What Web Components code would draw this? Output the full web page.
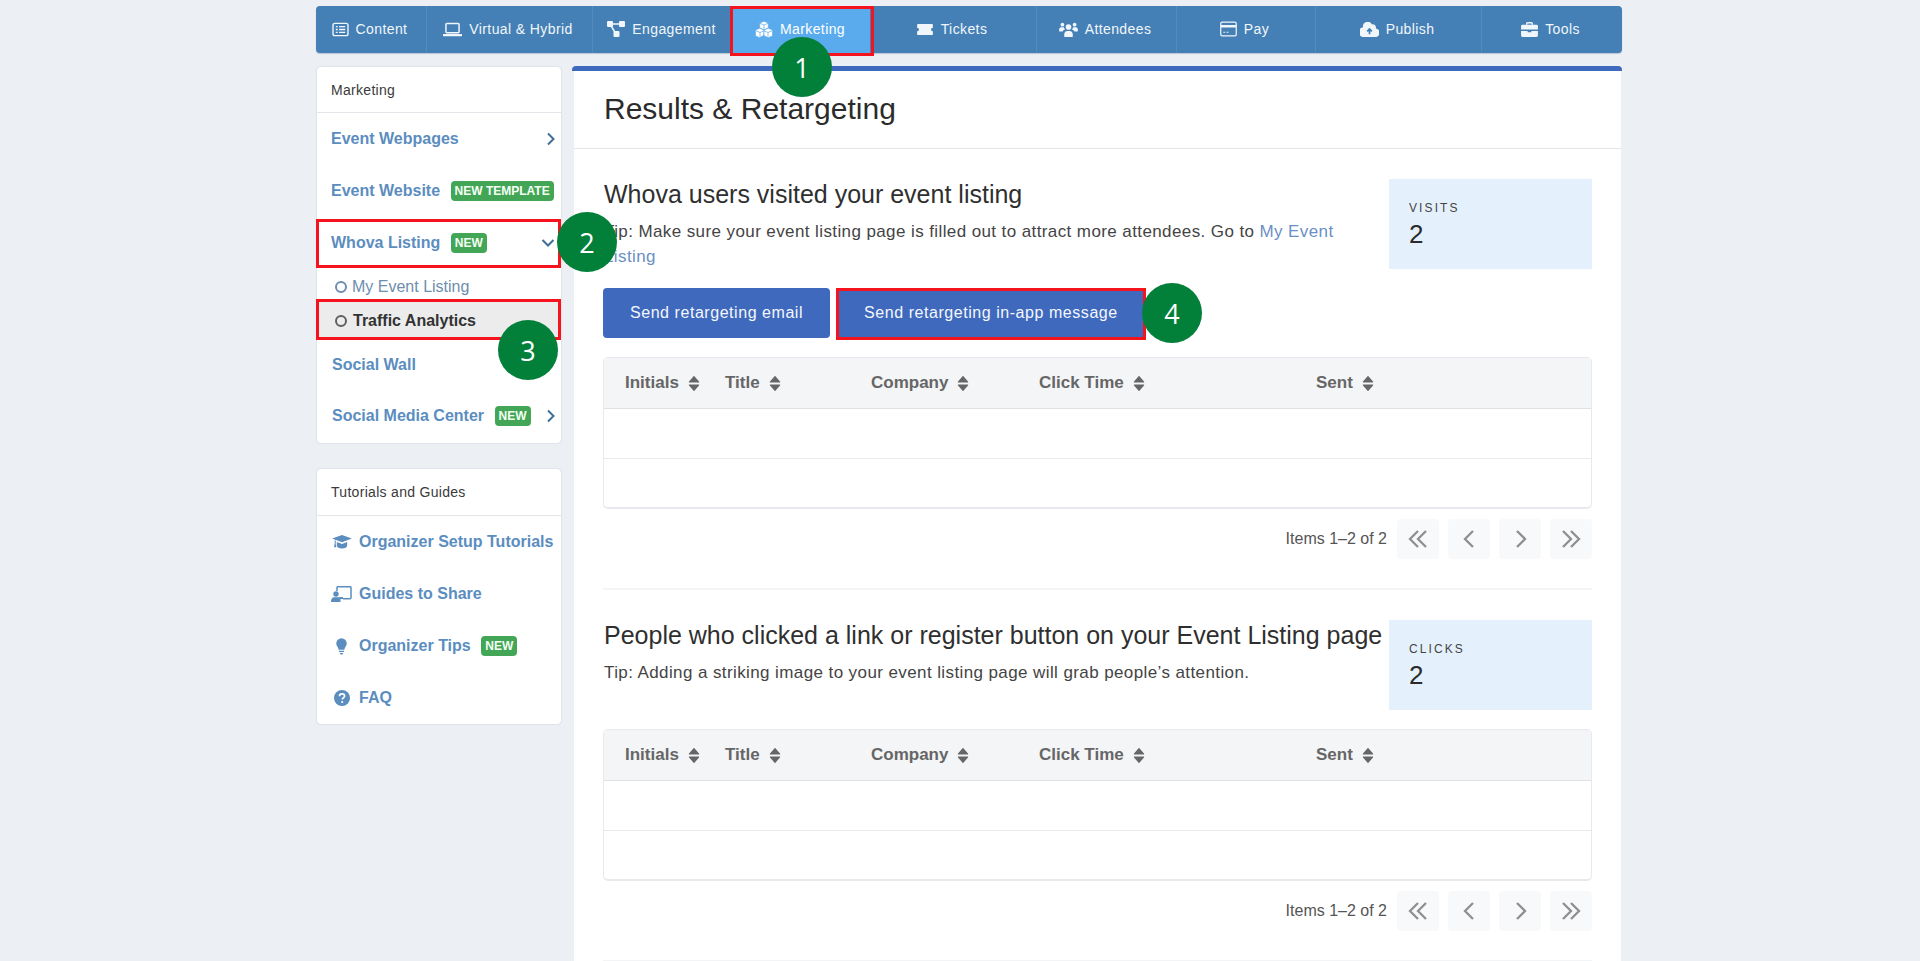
<!DOCTYPE html>
<html lang="en"><head><meta charset="utf-8"><title>Results &amp; Retargeting</title>
<style>
html,body{margin:0;height:961px;overflow:hidden;background:#ecf0f5;font-family:"Liberation Sans",Arial,sans-serif;color:#333}
</style></head><body>
<app-shell>
  <top-nav slot="nav">
    <nav-item w="111" icon="content">Content</nav-item>
    <nav-item w="166" icon="laptop">Virtual &amp; Hybrid</nav-item>
    <nav-item w="140" icon="diagram" plain>Engagement</nav-item>
    <nav-item w="137" icon="cubes" active>Marketing</nav-item>
    <nav-item w="167" icon="ticket">Tickets</nav-item>
    <nav-item w="140" icon="users">Attendees</nav-item>
    <nav-item w="139" icon="pay">Pay</nav-item>
    <nav-item w="166" icon="cloud">Publish</nav-item>
    <nav-item w="140" icon="tools" plain>Tools</nav-item>
  </top-nav>
  <side-card slot="side" heading="Marketing" h="376" hh="46">
    <side-item chev="right">Event Webpages</side-item>
    <side-item>Event Website<new-badge>NEW TEMPLATE</new-badge></side-item>
    <side-item chev="down">Whova Listing<new-badge>NEW</new-badge></side-item>
    <sub-item>My Event Listing</sub-item>
    <sub-item current>Traffic Analytics</sub-item>
    <side-item nudge>Social Wall</side-item>
    <side-item nudge chev="right">Social Media Center<new-badge>NEW</new-badge></side-item>
  </side-card>
  <side-card slot="side" heading="Tutorials and Guides" h="255" hh="47">
    <side-item icon="grad">Organizer Setup Tutorials</side-item>
    <side-item icon="teach">Guides to Share</side-item>
    <side-item icon="bulb">Organizer Tips<new-badge>NEW</new-badge></side-item>
    <side-item icon="help">FAQ</side-item>
  </side-card>
  <main-panel slot="main" heading="Results &amp; Retargeting">
    <result-section heading="Whova users visited your event listing" stat="VISITS" value="2">
      <span slot="tip">Tip: Make sure your event listing page is filled out to attract more attendees. Go to <text-link>My Event Listing</text-link></span>
      <action-button slot="actions">Send retargeting email</action-button>
      <action-button slot="actions">Send retargeting in-app message</action-button>
    </result-section>
    <result-section heading="People who clicked a link or register button on your Event Listing page" stat="CLICKS" value="2">
      <span slot="tip">Tip: Adding a striking image to your event listing page will grab people’s attention.</span>
    </result-section>
  </main-panel>
  <mark-box slot="marks" style="left:730px;top:6px;width:144px;height:50px"></mark-box>
  <mark-box slot="marks" style="left:316px;top:219px;width:245px;height:49px"></mark-box>
  <mark-box slot="marks" style="left:316px;top:299px;width:245px;height:41px"></mark-box>
  <mark-box slot="marks" style="left:836px;top:288px;width:310px;height:52px"></mark-box>
  <step-dot slot="marks" style="left:772px;top:37px">1</step-dot>
  <step-dot slot="marks" style="left:557px;top:212px">2</step-dot>
  <step-dot slot="marks" style="left:498px;top:320px">3</step-dot>
  <step-dot slot="marks" style="left:1142px;top:283px">4</step-dot>
</app-shell>
<script>
const ICONS={
content:'<svg viewBox="0 0 18 16" width="17" height="15"><rect x="1" y="1.5" width="16" height="13" rx="2" fill="none" stroke="currentColor" stroke-width="1.5"/><path d="M4 5h2M4 8h2M4 11h2M7.5 5H14M7.5 8H14M7.5 11H14" stroke="currentColor" stroke-width="1.4"/></svg>',
laptop:'<svg viewBox="0 0 20 16" width="19" height="15"><rect x="3" y="1.5" width="14" height="10" rx="1" fill="none" stroke="currentColor" stroke-width="1.6"/><path d="M.5 14h19" stroke="currentColor" stroke-width="2.2" stroke-linecap="round"/></svg>',
diagram:'<svg viewBox="0 0 18 16" width="18" height="16"><path d="M3 3h12M3 3l6 10" stroke="currentColor" stroke-width="1.5" fill="none"/><rect x="0" y="0" width="6" height="6" rx="1" fill="currentColor"/><rect x="12" y="0" width="6" height="6" rx="1" fill="currentColor"/><rect x="6.5" y="10" width="6" height="6" rx="1" fill="currentColor"/></svg>',
cubes:'<svg viewBox="0 0 18 17" width="18" height="17" fill="#fff" stroke="#5aabee" stroke-width=".7"><path d="M9 .2l4.300 1.800v5l-4.300 2-4.300-2V2z"/><path d="M4.700 7.200L9 9v5l-4.300 2.800L.4 14.800V9z"/><path d="M13.300 7.200L17.600 9v5.800l-4.300 2-4.300-2V9z"/><path d="M5 2.300l4 1.700 4-1.700M1 9.800l4 1.700 4-1.700 4 1.700 4-1.700M9 4v4.500M5 11.500v5M13 11.500v5" fill="none"/></svg>',
ticket:'<svg viewBox="0 0 18 14" width="18" height="13"><path d="M1.500 1h15a1 1 0 0 1 1 1v3a2 2 0 0 0 0 4v3a1 1 0 0 1-1 1h-15a1 1 0 0 1-1-1V9a2 2 0 0 0 0-4V2a1 1 0 0 1 1-1z" fill="currentColor"/></svg>',
users:'<svg viewBox="0 0 20 16" width="19" height="15" fill="currentColor"><circle cx="10" cy="5.300" r="3"/><path d="M5.500 16v-3c0-2 1.500-3.500 3-3.500h3c1.500 0 3 1.500 3 3.500v3z"/><circle cx="3.500" cy="2.800" r="2"/><circle cx="16.500" cy="2.800" r="2"/><path d="M0 9.500V8c0-1.500 1-2.500 2-2.500h3c.3 1 .8 1.800 1.500 2.400C5 8.300 4 9 3.700 10H.5a.5.5 0 0 1-.5-.5zM20 9.500V8c0-1.500-1-2.500-2-2.500h-3c-.3 1-.8 1.800-1.500 2.400 1.500.4 2.500 1.100 2.800 2.100h3.200a.5.5 0 0 0 .5-.5z"/></svg>',
pay:'<svg viewBox="0 0 18 16" width="17" height="16"><rect x=".8" y=".8" width="16.400" height="14.400" rx="1.500" fill="none" stroke="currentColor" stroke-width="1.300"/><path d="M1 5h16" stroke="currentColor" stroke-width="2.600"/><path d="M3.500 11.500h2M7 11.500h2" stroke="currentColor" stroke-width="1.200"/></svg>',
cloud:'<svg viewBox="0 0 20 16" width="19" height="15"><path d="M16.700 7A3.500 3.500 0 0 0 12.500 2.500 5 5 0 0 0 3.100 5.500 4.600 4.600 0 0 0 4.500 16h11.500a4.500 4.500 0 0 0 .7-9z" fill="currentColor"/><path d="M10 13V7.500M7.500 10L10 7.500l2.500 2.500" fill="none" stroke="#4480b5" stroke-width="1.800"/></svg>',
tools:'<svg viewBox="0 0 18 16" width="17" height="15"><path d="M6 3V1.800A1 1 0 0 1 7 .8h4a1 1 0 0 1 1 1V3" fill="none" stroke="currentColor" stroke-width="1.500"/><path d="M1.500 3h15A1.500 1.500 0 0 1 18 4.500V8H0V4.500A1.500 1.500 0 0 1 1.500 3zM0 9.500h7V11h4V9.500h7v5a1.500 1.500 0 0 1-1.500 1.500h-15A1.500 1.500 0 0 1 0 14.500z" fill="currentColor"/></svg>',
grad:'<svg viewBox="0 0 21 16" width="20" height="15" fill="currentColor"><path d="M10.500 0L21 3.800l-10.500 3.900L3.500 5.100v1.500c.4.200.5.500.5.900s-.1.600-.4.800l.9 4.700H2l.9-4.700a1 1 0 0 1 0-1.700V4.800L0 3.800z"/><path d="M5 7.500l5.500 2 5.500-2v4c0 1.700-2.500 3-5.500 3S5 13.200 5 11.500z"/></svg>',
teach:'<svg viewBox="0 0 21 16" width="21" height="16"><path d="M6 5V1.500A1 1 0 0 1 7 .7h12a1 1 0 0 1 1 1v10a1 1 0 0 1-1 1h-7" fill="none" stroke="currentColor" stroke-width="1.500"/><circle cx="5" cy="8" r="2.700" fill="currentColor"/><path d="M0 15.500c0-2.700 1.500-4.300 3-4.300h4l5-.2v2H9.500v3H.5a.5.5 0 0 1-.5-.5z" fill="currentColor"/></svg>',
bulb:'<svg viewBox="0 0 12 18" width="11" height="17" fill="currentColor"><path d="M6 0a5.700 5.700 0 0 1 5.700 5.800c0 2.700-2.200 4-2.600 6.700H2.900C2.500 9.800.3 8.500.3 5.800A5.700 5.700 0 0 1 6 0z"/><path d="M3.200 13.500h5.600v1.500H3.200zM4 16h4l-1 1.800H5z"/></svg>',
help:'<svg viewBox="0 0 16 16" width="16" height="16"><circle cx="8" cy="8" r="8" fill="currentColor"/><path d="M5.500 6.200c0-1.500 1.100-2.300 2.500-2.300s2.600.8 2.600 2.200c0 1.800-2.300 1.800-2.300 3.400" fill="none" stroke="#fff" stroke-width="1.700"/><circle cx="8.200" cy="12" r="1.100" fill="#fff"/></svg>'
};
function def(name,html,setup){
  customElements.define(name,class extends HTMLElement{
    constructor(){super();this.attachShadow({mode:'open'}).innerHTML=html;}
    connectedCallback(){if(setup)setup(this,this.shadowRoot);}
  });
}
def('stat-box',`<style>
  :host{display:block;width:203px;height:90px;flex:none;box-sizing:border-box;background:#e4f1fc;padding:21px 20px 0}
  .l{font-size:12px;letter-spacing:2.1px;line-height:16px;color:#444}
  .v{font-size:26px;line-height:34px;color:#2b2b2b;margin-top:1px}
  </style><div class="l" id="l"></div><div class="v" id="v"></div>`);
def('app-shell',`<style>
:host{display:block;position:relative;width:1920px;height:961px;overflow:hidden}
.wrap{width:1306px;margin-left:316px;padding-top:6px}
.row{display:flex;margin-top:13px;align-items:flex-start}
.side{width:246px;margin-top:1px;display:flex;flex-direction:column;gap:26px;flex:none}
.main{margin-left:10px;flex:1;min-width:0}
::slotted(side-card){margin-left:1px}
</style><div class="wrap"><slot name="nav"></slot><div class="row"><div class="side"><slot name="side"></slot></div><div class="main"><slot name="main"></slot></div></div></div><slot name="marks"></slot>`);
def('top-nav',`<style>:host{display:flex;height:47px;background:#4480b5;border-radius:4px;overflow:hidden;box-shadow:0 1px 1px rgba(40,70,110,.25)}</style><slot></slot>`);
def('nav-item',`<style>
:host{display:flex;align-items:center;justify-content:center;gap:7px;box-sizing:border-box;color:#f1f6fb;font-size:14px;letter-spacing:.4px;border-right:1px solid rgba(255,255,255,.09);flex:none;padding-bottom:1px;padding-right:3px}
:host([plain]),:host([active]){border-right:0}
:host([active]){background:#5aabee;color:#fff}
i{display:flex;font-style:normal}
</style><i id="i"></i><span><slot></slot></span>`,(el,s)=>{el.style.width=el.getAttribute('w')+'px';s.getElementById('i').innerHTML=ICONS[el.getAttribute('icon')];});
def('side-card',`<style>
:host{display:block;background:#fff;border-radius:4px;box-shadow:0 0 2px rgba(80,90,110,.28);width:244px;box-sizing:border-box}
header{box-sizing:border-box;padding:0 14px;display:flex;align-items:center;font-size:14px;color:#3a3a3a;border-bottom:1px solid #e2e5ea;letter-spacing:.3px}
</style><header id="h"></header><slot></slot>`,(el,s)=>{const h=s.getElementById('h');h.textContent=el.getAttribute('heading');h.style.height=el.getAttribute('hh')+'px';el.style.height=el.getAttribute('h')+'px';});
def('side-item',`<style>
:host{display:flex;align-items:center;height:52px;padding:0 14px;box-sizing:border-box;position:relative;font-size:16px;font-weight:700;color:#5b8dbf;white-space:nowrap}
:host([nudge]){padding-left:15px;height:51px}
i{display:flex;width:27px;flex:none;font-style:normal;justify-content:center;margin-left:-3px;margin-right:4px;color:#5b8dbf}
svg.c{position:absolute;right:5px;top:50%;margin-top:-7px}
</style><span id="ic" style="display:contents"></span><slot></slot><span id="ch" style="display:contents"></span>`,(el,s)=>{
  const ic=el.getAttribute('icon');if(ic)s.getElementById('ic').innerHTML='<i>'+ICONS[ic]+'</i>';
  const c=el.getAttribute('chev');
  if(c==='right')s.getElementById('ch').innerHTML='<svg class="c" width="10" height="14" viewBox="0 0 10 14"><path d="M2 1.500L7.500 7 2 12.500" fill="none" stroke="#3f6f96" stroke-width="2"/></svg>';
  if(c==='down')s.getElementById('ch').innerHTML='<svg class="c" style="right:6px" width="14" height="14" viewBox="0 0 14 14"><path d="M1.500 4L7 9.500 12.500 4" fill="none" stroke="#3f6f96" stroke-width="2"/></svg>';
});
def('new-badge',`<style>:host{display:inline-flex;align-items:center;height:20px;padding:0 4px;margin-left:10.5px;background:#43a657;color:#f4fff4;font-size:12px;font-weight:700;border-radius:4px;letter-spacing:0}</style><slot></slot>`);
def('sub-item',`<style>
:host{display:flex;align-items:center;gap:5px;height:32px;padding:4px 0 0 18px;box-sizing:border-box;font-size:16px;color:#6d8eae}
:host([current]){height:38px;background:#ececec;color:#333;font-weight:700;gap:6px;padding-top:2px}
b{width:8px;height:8px;border:2px solid #6d8eae;border-radius:50%;flex:none}
:host([current]) b{border-color:#5f5f5f}
</style><b></b><slot></slot>`);
def('main-panel',`<style>
:host{display:block;box-sizing:border-box;width:1050px;height:900px}
.bar{height:5px;background:#3f69bc;border-radius:4px 4px 0 0}
.body{margin:0 1px 0 2px;background:#fff;height:895px;padding:0 29px 0 29px;box-sizing:border-box}
h1{margin:0 -29px;height:78px;padding:0 0 0 30px;box-sizing:border-box;font-size:30px;font-weight:400;line-height:76px;color:#2b2b2b;border-bottom:1px solid #e3e5e9}
</style><div class="bar"></div><div class="body"><h1 id="h"></h1><slot></slot></div>`,(el,s)=>{s.getElementById('h').textContent=el.getAttribute('heading');});
def('result-section',`<style>
:host{display:block;padding:30px 0 29px;border-bottom:2px solid #f3f4f6}
.top{display:flex;gap:4px;min-height:90px}
.text{flex:1;min-width:0}
h2{margin:0;font-size:25px;font-weight:400;line-height:30px;color:#2f2f2f;white-space:nowrap;margin-left:1px}
p{margin:10px 0 0 1px;font-size:17px;line-height:25px;color:#444;letter-spacing:.4px}
.actions{display:flex;gap:7px;margin-top:19px}
.actions:not(.has){display:none}
data-table{margin-top:19px}
</style><div class="top"><div class="text"><h2 id="h"></h2><p><slot name="tip"></slot></p></div><stat-box id="st"></stat-box></div><div class="actions" id="a"><slot name="actions"></slot></div><data-table></data-table><page-bar></page-bar>`,(el,s)=>{
  s.getElementById('h').textContent=el.getAttribute('heading');
  const st=s.getElementById('st');
  st.shadowRoot.getElementById('l').textContent=el.getAttribute('stat');st.shadowRoot.getElementById('v').textContent=el.getAttribute('value');
  if(el.querySelector('[slot=actions]'))s.getElementById('a').classList.add('has');
});
def('text-link',`<style>:host{color:#6b90c4}</style><slot></slot>`);
def('action-button',`<style>:host{display:flex;align-items:center;height:50px;padding:0 27px;box-sizing:border-box;background:#3f69bc;color:#f4f7fc;border-radius:4px;font-size:16px;letter-spacing:.55px}</style><slot></slot>`);
def('data-table',`<style>
:host{display:block;border:1px solid #e8e9ec;border-width:1px 1px 2px;border-radius:5px;overflow:hidden;box-sizing:border-box;height:152px}
.h{display:grid;grid-template-columns:100px 146px 168px 277px 1fr;height:51px;box-sizing:border-box;padding-left:21px;background:#f4f5f7;border-bottom:1px solid #dfe1e5;align-items:center;font-size:17px;font-weight:700;color:#666}
.c{display:flex;align-items:center;gap:9px}
.r{height:50px;box-sizing:border-box;border-bottom:1px solid #e8e9ec}
.r:last-child{border:0;height:48px}
</style><div class="h" id="h"></div><div class="r"></div><div class="r"></div>`,(el,s)=>{
  s.getElementById('h').innerHTML=['Initials','Title','Company','Click Time','Sent'].map(t=>`<div class="c">${t}<svg width="12" height="17" viewBox="0 0 12 17" fill="#666"><path d="M6 .8L11 6.600a.5.5 0 0 1-.3.9H1.300a.5.5 0 0 1-.3-.9zM6 16.200L11 10.400a.5.5 0 0 0-.3-.9H1.300a.5.5 0 0 0-.3.9z"/></svg></div>`).join('');
});
const PB={first:'M10 1L2 9l8 8M18 1l-8 8 8 8',prev:'M14 1L6 9l8 8',next:'M7 1l8 8-8 8',last:'M10 1l8 8-8 8M2 1l8 8-8 8'};
def('page-bar',`<style>
:host{display:flex;align-items:center;justify-content:flex-end;height:40px;margin-top:10px;gap:9px;font-size:16px;color:#555}
span{margin-right:1px}
b{width:42px;height:40px;background:#f8f9fb;border-radius:4px;display:flex;align-items:center;justify-content:center}
</style><span>Items 1–2 of 2</span>${Object.values(PB).map(d=>`<b><svg width="20" height="18" viewBox="0 0 20 18"><path d="${d}" fill="none" stroke="#8f8f8f" stroke-width="2.300"/></svg></b>`).join('')}`);
def('mark-box',`<style>:host{position:absolute;display:block;box-sizing:border-box;border:3px solid #f5141e}</style>`);
def('step-dot',`<style>:host{position:absolute;display:flex;align-items:center;justify-content:center;width:60px;height:60px;border-radius:50%;background:#02803a;color:#fff;font:400 27px "Open Sans",sans-serif}</style><slot></slot>`);
</script>
</body></html>
